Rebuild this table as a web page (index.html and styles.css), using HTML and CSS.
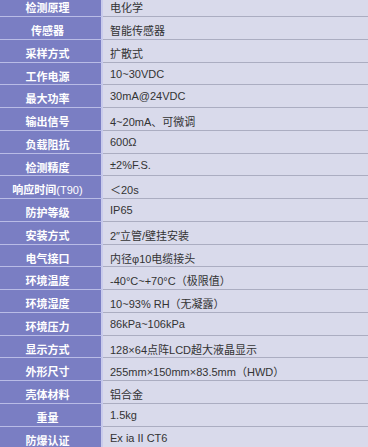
FILE: index.html
```html
<!DOCTYPE html>
<html lang="zh">
<head>
<meta charset="utf-8">
<link rel="stylesheet" href="styles.css">
</head>
<body>
<div class="spec">
  <div class="row"><div class="k">检测原理</div><div class="v">电化学</div></div>
  <div class="row"><div class="k">传感器</div><div class="v">智能传感器</div></div>
  <div class="row"><div class="k">采样方式</div><div class="v">扩散式</div></div>
  <div class="row"><div class="k">工作电源</div><div class="v">10~30VDC</div></div>
  <div class="row"><div class="k">最大功率</div><div class="v">30mA@24VDC</div></div>
  <div class="row"><div class="k">输出信号</div><div class="v">4~20mA、可微调</div></div>
  <div class="row"><div class="k">负载阻抗</div><div class="v">600Ω</div></div>
  <div class="row"><div class="k">检测精度</div><div class="v">±2%F.S.</div></div>
  <div class="row"><div class="k">响应时间<span class="lat">(T90)</span></div><div class="v">＜20s</div></div>
  <div class="row"><div class="k">防护等级</div><div class="v">IP65</div></div>
  <div class="row"><div class="k">安装方式</div><div class="v">2″立管/壁挂安装</div></div>
  <div class="row"><div class="k">电气接口</div><div class="v">内径φ10电缆接头</div></div>
  <div class="row"><div class="k">环境温度</div><div class="v">-40°C~+70°C（极限值）</div></div>
  <div class="row"><div class="k">环境湿度</div><div class="v">10~93% RH（无凝露）</div></div>
  <div class="row"><div class="k">环境压力</div><div class="v">86kPa~106kPa</div></div>
  <div class="row"><div class="k">显示方式</div><div class="v">128×64点阵LCD超大液晶显示</div></div>
  <div class="row"><div class="k">外形尺寸</div><div class="v">255mm×150mm×83.5mm（HWD）</div></div>
  <div class="row"><div class="k">壳体材料</div><div class="v">铝合金</div></div>
  <div class="row"><div class="k">重量</div><div class="v">1.5kg</div></div>
  <div class="row"><div class="k">防爆认证</div><div class="v">Ex ia II CT6</div></div>
</div>
</body>
</html>
```

FILE: styles.css
```css
html, body {
  margin: 0;
  padding: 0;
  background: #d9daeb;
  overflow: hidden;
}
.spec {
  margin-top: -5.78px;
  font-family: "Liberation Sans", Arial, "Noto Sans CJK SC", sans-serif;
  font-size: 11px;
}
.row {
  display: flex;
  height: 22.78px;
  box-sizing: border-box;
}
.k {
  width: 103px;
  flex: none;
  box-sizing: border-box;
  background: #7a7ec3;
  color: #ffffff;
  font-weight: bold;
  text-align: center;
  padding: 5px 6px 0 0;
  border-bottom: 1px solid #b9bce6;
  border-right: 2px solid #c9cbec;
  white-space: nowrap;
}
.lat {
  font-weight: normal;
}
.v {
  flex: 1;
  box-sizing: border-box;
  background: #d9daeb;
  color: #333333;
  padding: 5px 0 0 7px;
  border-bottom: 1px solid #abadc1;
  white-space: nowrap;
}
```
